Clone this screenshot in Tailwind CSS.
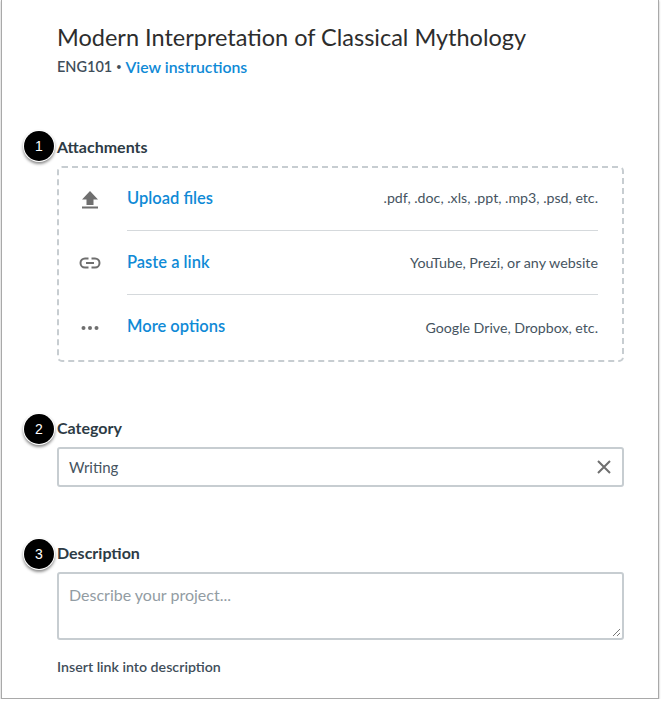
<!DOCTYPE html>
<html lang="en">
  <head>
    <meta charset="UTF-8" />
    <title>New project</title>
    <script src="https://cdn.jsdelivr.net/npm/@tailwindcss/browser@4"></script>
  </head>
  <body class="bg-white font-['Lato','Liberation_Sans',sans-serif] text-[#2d3b45]">
    <div class="relative ml-[1px] h-[699px] w-[658px] border-x border-b border-[#a9a9a9] bg-white pl-[55px] pr-[35px] pt-[22px] shadow-[0_1px_2px_rgba(0,0,0,0.3)]">
      <h1 class="h-[30px] text-[23.5px] leading-[30px] text-[#2d2d2d]">Modern Interpretation of Classical Mythology</h1>
      <p class="mt-[4px] flex h-[22px] items-center text-[14.5px] leading-[22px] font-semibold text-[#3f4e5a]">ENG101<span class="mx-[4px] text-[9px]">•</span><a href="#" class="text-[15.8px] text-[#0f8ad6]">View instructions</a></p>

      <section class="relative mt-[59px]">
        <span class="absolute left-[-33px] top-[-6px] flex size-[30px] items-center justify-center rounded-full bg-black text-[14px] text-white shadow-[0_2px_3px_1px_rgba(0,0,0,0.45)] ring-1 ring-white font-['Liberation_Sans',sans-serif]">1</span>
        <label class="block h-[21px] text-[16px] leading-[20px] font-bold text-[#2d3b45]">Attachments</label>
        <div class="mt-[8px] h-[196px] w-[567px] rounded-[5px] border-2 border-dashed border-[#c7cdd1] pl-[19px] pr-[24px]">
          <div class="flex h-[63px] items-center">
            <svg class="mr-[25px] shrink-0" width="24" height="24" viewBox="0 0 24 24" fill="#6f6f6f"><path d="M12 3 20 11.5H15.5V17H8.5V11.5H4z"/><rect x="4" y="18.5" width="16" height="2"/></svg>
            <div class="flex h-full flex-1 items-center justify-between border-b border-[#d5d9dc] pb-[2px]">
              <a href="#" class="text-[16.5px] font-semibold text-[#0f8ad6]">Upload files</a>
              <span class="text-[14.2px] text-[#46545f]">.pdf, .doc, .xls, .ppt, .mp3, .psd, etc.</span>
            </div>
          </div>
          <div class="flex h-[64px] items-center">
            <svg class="mr-[25px] shrink-0" width="24" height="24" viewBox="0 0 24 24" fill="none" stroke="#6f6f6f" stroke-width="2"><path d="M10.5 7.5H7a4.5 4.5 0 0 0 0 9h3.5M13.5 7.5H17a4.5 4.5 0 0 1 0 9h-3.5M8 12h8"/></svg>
            <div class="flex h-full flex-1 items-center justify-between border-b border-[#d5d9dc]">
              <a href="#" class="text-[16.5px] font-semibold text-[#0f8ad6]">Paste a link</a>
              <span class="text-[14.3px] text-[#46545f]">YouTube, Prezi, or any website</span>
            </div>
          </div>
          <div class="flex h-[65px] items-center">
            <svg class="mr-[25px] shrink-0" width="24" height="24" viewBox="0 0 24 24" fill="#6f6f6f"><circle cx="5.5" cy="12" r="2"/><circle cx="12" cy="12" r="2"/><circle cx="18.5" cy="12" r="2"/></svg>
            <div class="flex h-full flex-1 items-center justify-between pb-[2px]">
              <a href="#" class="text-[16.5px] font-semibold text-[#0f8ad6]">More options</a>
              <span class="mt-[2px] text-[14.2px] text-[#46545f]">Google Drive, Dropbox, etc.</span>
            </div>
          </div>
        </div>
      </section>

      <section class="relative mt-[56px]">
        <span class="absolute left-[-33px] top-[-4px] flex size-[30px] items-center justify-center rounded-full bg-black text-[14px] text-white shadow-[0_2px_3px_1px_rgba(0,0,0,0.45)] ring-1 ring-white font-['Liberation_Sans',sans-serif]">2</span>
        <label class="block h-[21px] text-[16px] leading-[20px] font-bold text-[#2d3b45]">Category</label>
        <div class="mt-[8px] flex h-[40px] w-[567px] items-center justify-between rounded-[3px] border-2 border-[#c7cdd1] pl-[10px] pr-[10px] text-[15px] text-[#46545f]">
          <span>Writing</span>
          <svg width="16" height="16" viewBox="0 0 16 16" fill="none" stroke="#6f6f6f" stroke-width="2"><path d="M2 2 14 14M14 2 2 14"/></svg>
        </div>
      </section>

      <section class="relative mt-[56px]">
        <span class="absolute left-[-33px] top-[-4px] flex size-[30px] items-center justify-center rounded-full bg-black text-[14px] text-white shadow-[0_2px_3px_1px_rgba(0,0,0,0.45)] ring-1 ring-white font-['Liberation_Sans',sans-serif]">3</span>
        <label class="block h-[21px] text-[16px] leading-[20px] font-bold text-[#2d3b45]">Description</label>
        <div class="relative mt-[8px] h-[68px] w-[567px] rounded-[3px] border-2 border-[#c7cdd1] px-[10px] pt-[10px] text-[16px] leading-[22px] text-[#929ca3]">
          Describe your project...
          <svg class="absolute bottom-[1px] right-[1px]" width="9" height="9" viewBox="0 0 9 9" fill="none" stroke="#777" stroke-width="1"><path d="M1 8 8 1M5 8 8 5"/></svg>
        </div>
        <p class="mt-[17px] text-[14.2px] leading-[20px] font-semibold text-[#3f4e5a]">Insert link into description</p>
      </section>
    </div>
  </body>
</html>
